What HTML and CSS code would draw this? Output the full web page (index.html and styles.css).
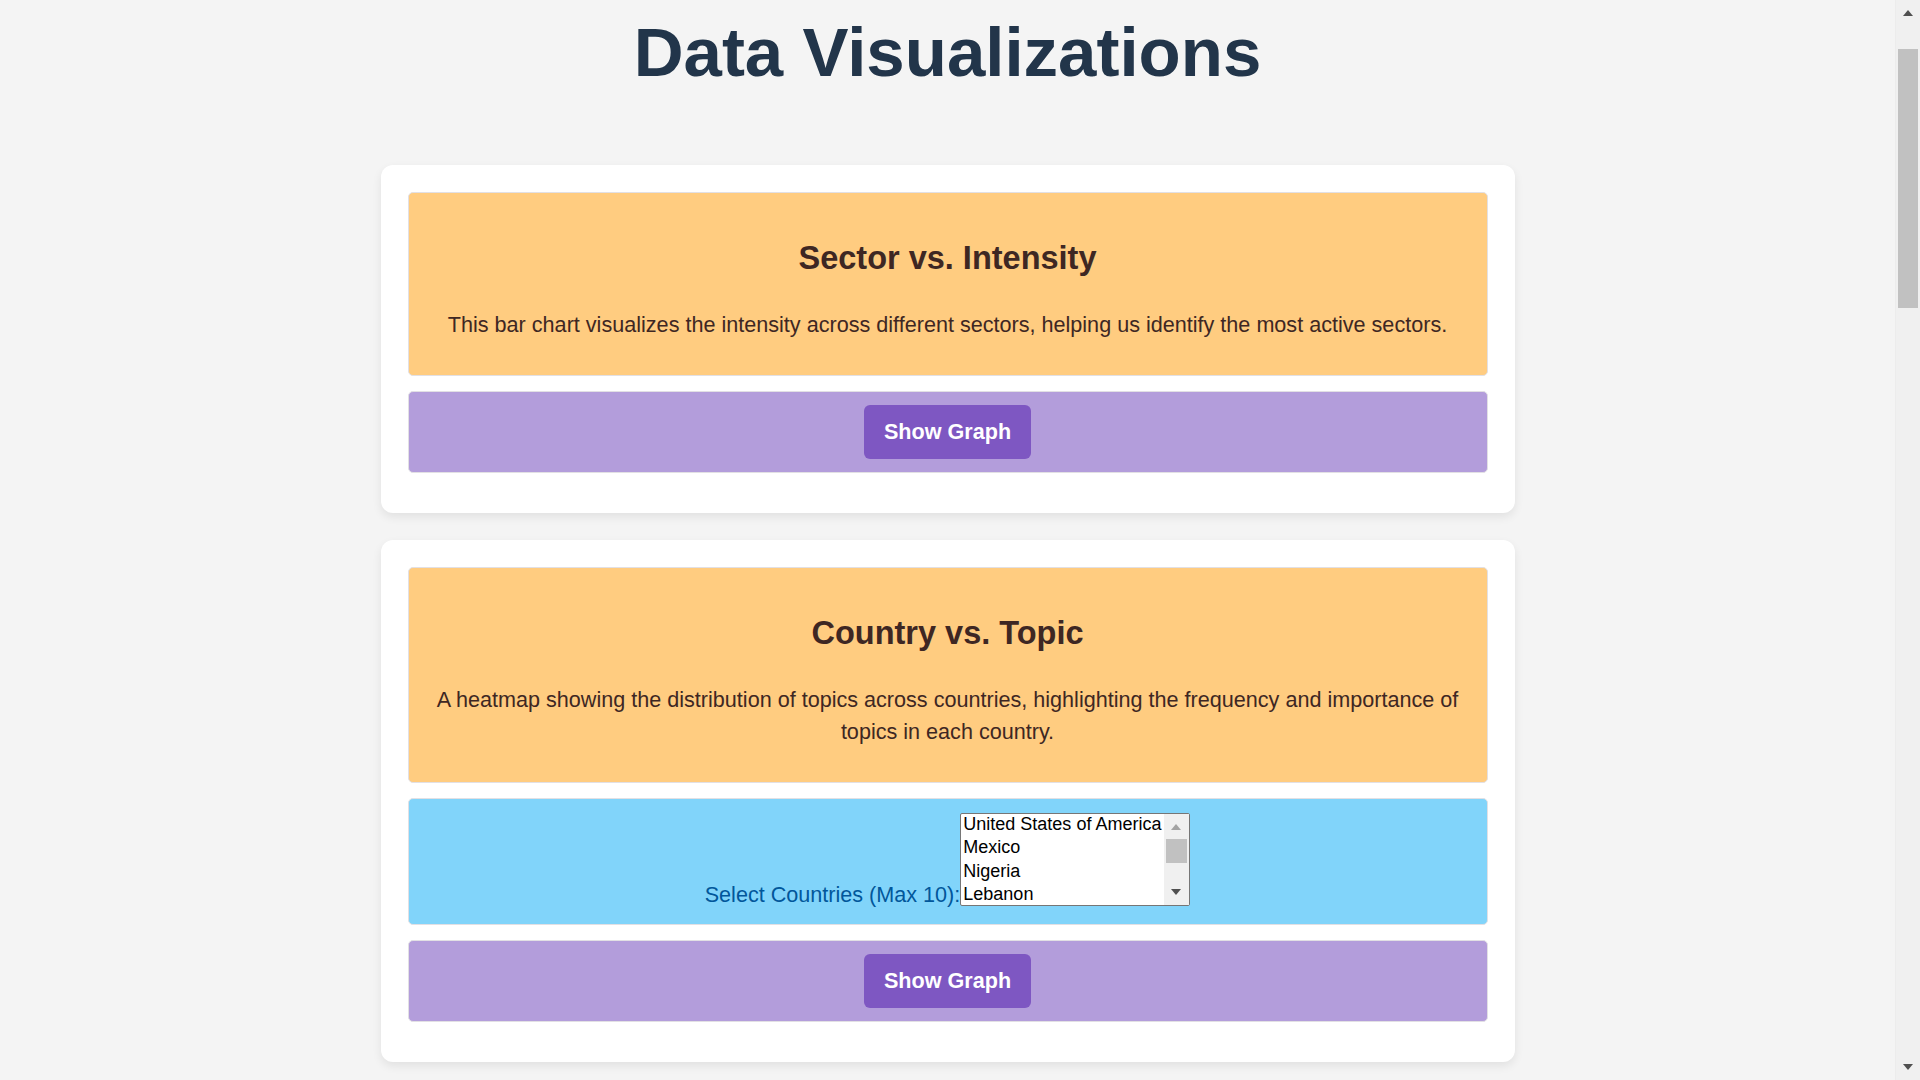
FILE: index.html
```html
<!DOCTYPE html>
<html lang="en">
<head>
<meta charset="utf-8">
<title>Data Visualizations</title>
<link rel="stylesheet" href="styles.css">
</head>
<body>
<header class="page-header">
  <h1 class="page-title">Data Visualizations</h1>
</header>
<main class="cards">
  <section class="card">
    <div class="card-info">
      <h2 class="card-title">Sector vs. Intensity</h2>
      <p class="card-text">This bar chart visualizes the intensity across different sectors, helping us identify the most active sectors.</p>
    </div>
    <div class="card-actions"><button class="btn" type="button">Show Graph</button></div>
  </section>

  <section class="card">
    <div class="card-info">
      <h2 class="card-title">Country vs. Topic</h2>
      <p class="card-text">A heatmap showing the distribution of topics across countries, highlighting the frequency and importance of topics in each country.</p>
    </div>
    <div class="card-filter">
      <label class="filter-label" for="countries">Select Countries (Max 10):</label><span class="listbox"><select class="filter-select" id="countries" multiple size="4">
          <option>United States of America</option>
          <option>Mexico</option>
          <option>Nigeria</option>
          <option>Lebanon</option>
          <option>Russia</option>
          <option>Saudi Arabia</option>
          <option>Angola</option>
          <option>Egypt</option>
          <option>South Africa</option>
          <option>India</option>
          <option>Ukraine</option>
          <option>Azerbaijan</option>
        </select><span class="fake-scroll fake-scroll--list" aria-hidden="true">
          <span class="fs-btn fs-btn--up fs-btn--disabled"></span>
          <span class="fs-thumb fs-thumb--list"></span>
          <span class="fs-space"></span>
          <span class="fs-btn fs-btn--down"></span>
        </span></span>
    </div>
    <div class="card-actions"><button class="btn" type="button">Show Graph</button></div>
  </section>
</main>

<div class="fake-scroll fake-scroll--page" aria-hidden="true">
  <span class="fs-btn fs-btn--up"></span>
  <span class="fs-gap"></span>
  <span class="fs-thumb fs-thumb--page"></span>
  <span class="fs-space"></span>
  <span class="fs-btn fs-btn--down"></span>
</div>
</body>
</html>
```

FILE: styles.css
```css
* {
  box-sizing: border-box;
}

html {
  background: #f4f4f4;
}

body {
  margin: 0;
  padding-right: 25px;
  font-family: "Liberation Sans", Arial, sans-serif;
  color: #3e2723;
  background: #f4f4f4;
}

/* ---------- header ---------- */
.page-header {
  padding-top: 13px;
  margin-bottom: 73px;
  text-align: center;
}

.page-title {
  margin: 0;
  font-size: 69px;
  font-weight: 700;
  line-height: normal;
  color: #22354a;
}

/* ---------- cards ---------- */
.cards {
  display: flex;
  flex-direction: column;
  align-items: center;
  gap: 27px;
  padding-bottom: 16px;
}

.card {
  width: 1134px;
  background: #fff;
  border-radius: 12px;
  box-shadow: 0 4px 10px rgba(0, 0, 0, 0.08);
  padding: 27px 27px 40px;
  display: flex;
  flex-direction: column;
  gap: 15px;
}

.card-info {
  background: #ffcc80;
  border: 1px solid #e2e0e4;
  border-radius: 5px;
  padding: 20px;
  text-align: center;
}

.card-title {
  margin: 27px 0 32px;
  font-size: 32.5px;
  font-weight: 700;
  line-height: normal;
  color: #3e2723;
}

.card-text {
  margin: 0 0 14px;
  font-size: 21.6px;
  line-height: 32px;
  color: #3e2723;
}

.card-filter {
  background: #81d4fa;
  border: 1px solid #e2e0e4;
  border-radius: 5px;
  padding: 14px 15px 18px;
  display: flex;
  justify-content: center;
  align-items: flex-end;
}

.filter-label {
  margin-bottom: -2px;
  font-size: 21.6px;
  line-height: normal;
  color: #01579b;
}

.listbox {
  position: relative;
  display: block;
  width: 230px;
  height: 93px;
}

.filter-select {
  display: block;
  width: 100%;
  height: 100%;
  margin: 0;
  padding: 0;
  font-family: "Liberation Sans", Arial, sans-serif;
  font-size: 18px;
  color: #000;
  background: #fff;
  border: 1px solid #767676;
  border-radius: 2px;
  outline: none;
  overflow: hidden;
}

.filter-select option {
  line-height: 21px;
  padding: 0 2px 2.3px;
}

.card-actions {
  background: #b39ddb;
  border: 1px solid #e2e0e4;
  border-radius: 5px;
  padding: 13px;
  text-align: center;
}

.btn {
  font-family: "Liberation Sans", Arial, sans-serif;
  font-size: 21.6px;
  font-weight: 700;
  line-height: normal;
  color: #fff;
  background: #7e57c2;
  border: none;
  border-radius: 6px;
  padding: 14px 19.5px;
  cursor: pointer;
}

/* ---------- scrollbar drawings ---------- */
.fake-scroll {
  display: flex;
  flex-direction: column;
  width: 25px;
  background: #f0f0f0;
}

.fake-scroll--page {
  position: fixed;
  top: 0;
  right: 0;
  height: 100vh;
  border-left: 1px solid #ececec;
}

.fake-scroll--list {
  position: absolute;
  top: 1px;
  right: 1px;
  bottom: 1px;
  width: 25px;
}

.fs-btn {
  position: relative;
  flex: 0 0 25px;
  height: 25px;
}

.fs-btn::after {
  content: "";
  position: absolute;
  left: 50%;
  margin-left: -5.5px;
  width: 0;
  height: 0;
  border-left: 5.5px solid transparent;
  border-right: 5.5px solid transparent;
}

.fs-btn--up::after {
  top: 10px;
  border-bottom: 6px solid #505050;
}

.fs-btn--down::after {
  top: 8.5px;
  border-top: 6px solid #505050;
}

.fs-btn--disabled::after {
  border-bottom-color: #a3a3a3;
}

.fs-gap {
  flex: 0 0 24px;
}

.fs-thumb {
  margin: 0 2px;
  background: #c1c1c1;
}

.fs-thumb--page {
  flex: 0 0 259px;
}

.fs-thumb--list {
  flex: 0 0 24px;
}

.fs-space {
  flex: 1 1 auto;
}
```
